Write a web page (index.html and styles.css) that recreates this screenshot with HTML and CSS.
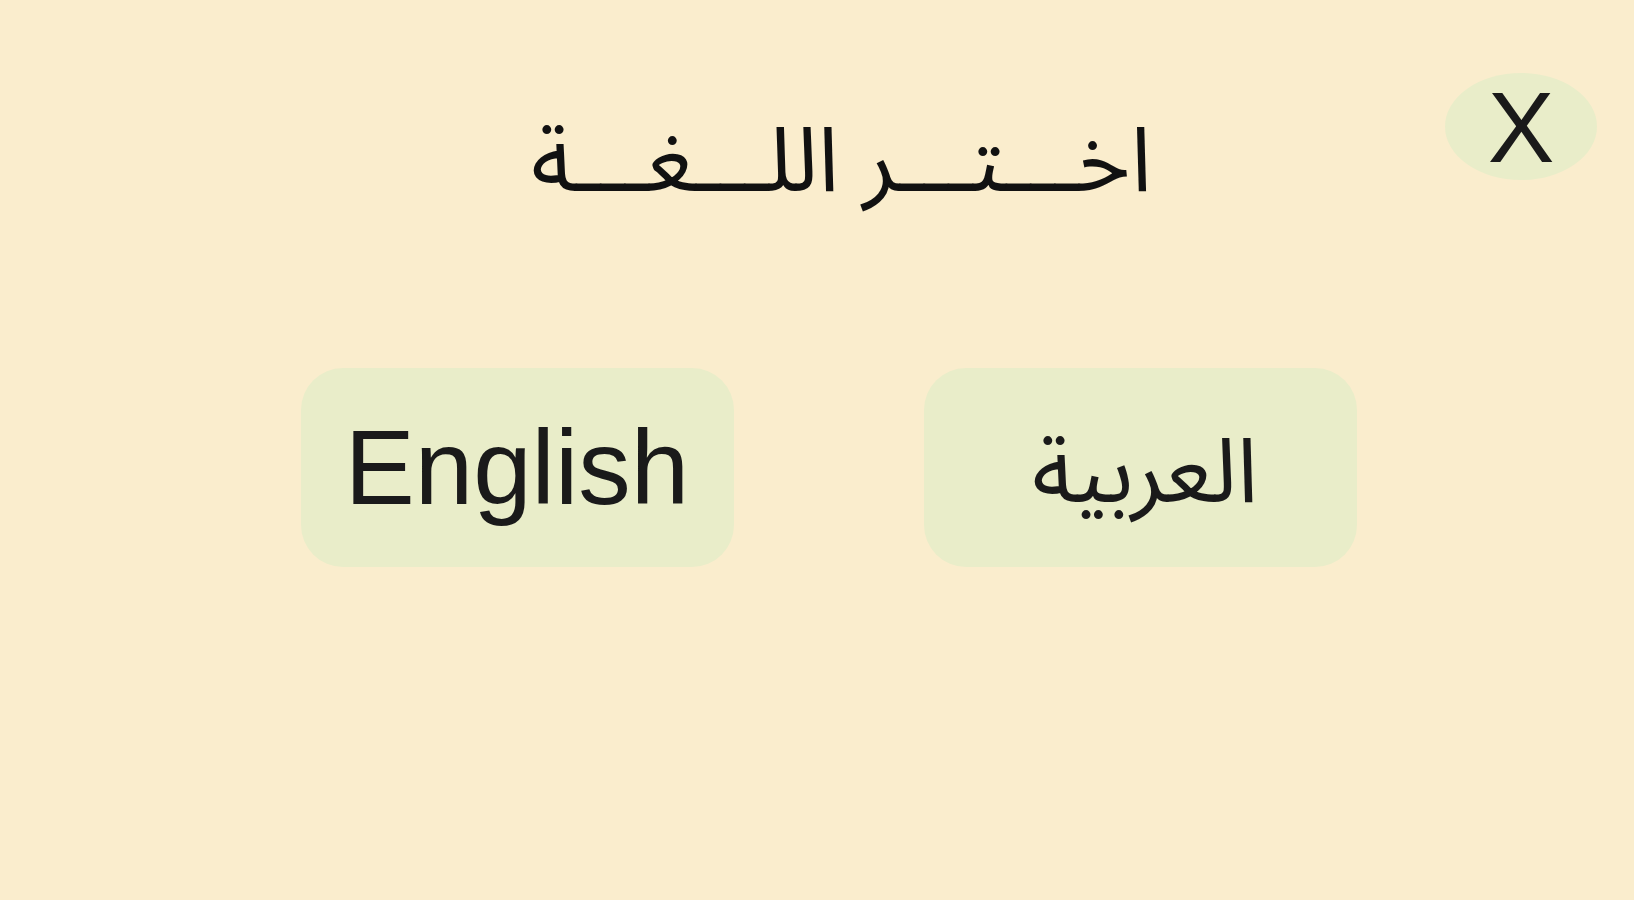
FILE: index.html
```html
<!DOCTYPE html>
<html lang="ar">
<head>
<meta charset="utf-8">
<title>اختر اللغة</title>
<link rel="stylesheet" href="styles.css">
</head>
<body>
<div class="page">
  <header class="header">
    <h1 class="title" dir="rtl">اخـــتـــر اللـــغـــة</h1>
    <button class="close" type="button">X</button>
  </header>
  <div class="choices">
    <button class="lang lang-en" type="button">English</button>
    <button class="lang lang-ar" type="button" dir="rtl">العربية</button>
  </div>
</div>
</body>
</html>
```
FILE: styles.css
```css
html, body {
  margin: 0;
  padding: 0;
}
body {
  background: #faedcd;
  font-family: "Liberation Sans", "Noto Sans Arabic", sans-serif;
  color: #1a1a1a;
  height: 900px;
  overflow: hidden;
}
.page {
  display: flex;
  flex-direction: column;
}
.header {
  display: grid;
  grid-template-columns: 1fr auto;
  align-items: start;
  padding-top: 73px;
  padding-right: 37px;
}
.title {
  margin: 0;
  padding-left: 238px;
  padding-top: 39px;
  height: 81px;
  text-align: center;
  font-family: "Noto Sans Arabic", "DejaVu Sans", sans-serif;
  font-weight: normal;
  font-size: 90px;
  line-height: 100px;
  color: #111;
}
.close {
  width: 152px;
  height: 107px;
  border: none;
  border-radius: 50%;
  background: #e9edc9;
  font-family: "Liberation Sans", sans-serif;
  font-size: 100px;
  line-height: 1;
  color: #1a1a1a;
  padding: 0;
  display: flex;
  align-items: center;
  justify-content: center;
}
.choices {
  display: flex;
  justify-content: center;
  gap: 190px;
  padding-left: 23px;
  margin-top: 175px;
}
.lang {
  width: 433px;
  height: 199px;
  border: none;
  border-radius: 42px;
  background: #e9edc9;
  color: #1a1a1a;
  padding: 0;
  display: flex;
  align-items: center;
  justify-content: center;
  line-height: 1;
}
.lang-en {
  font-family: "Liberation Sans", sans-serif;
  font-size: 105px;
}
.lang-ar {
  font-family: "Noto Sans Arabic", "DejaVu Sans", sans-serif;
  font-size: 90px;
  line-height: 120px;
  padding-left: 10px;
  padding-top: 10px;
}
```
